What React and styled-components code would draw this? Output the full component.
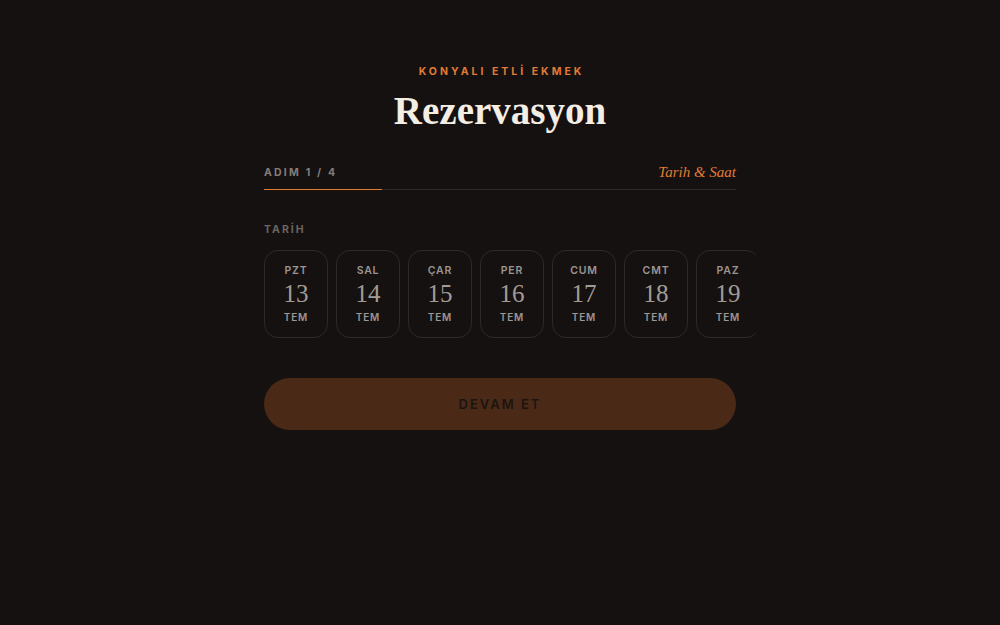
import styled, { createGlobalStyle } from 'styled-components';

const days = [
  { day: 'PZT', num: 13 },
  { day: 'SAL', num: 14 },
  { day: 'ÇAR', num: 15 },
  { day: 'PER', num: 16 },
  { day: 'CUM', num: 17 },
  { day: 'CMT', num: 18 },
  { day: 'PAZ', num: 19 },
];

const GlobalStyle = createGlobalStyle`
  html, body {
    margin: 0;
    padding: 0;
    background: #151111;
  }
  body {
    font-family: Inter, "Noto Sans", sans-serif;
  }
`;

export default function App() {
  const step = 1;
  const total = 4;

  return (
    <>
      <GlobalStyle />
      <Page>
        <Panel>
          <Header>
            <Brand>KONYALI ETLİ EKMEK</Brand>
            <Title>Rezervasyon</Title>
          </Header>

          <Steps>
            <StepRow>
              <StepCount>ADIM {step} / {total}</StepCount>
              <StepName>Tarih &amp; Saat</StepName>
            </StepRow>
            <Track>
              <Progress style={{ width: `${(step / total) * 100}%` }} />
            </Track>
          </Steps>

          <Section>
            <Label>TARİH</Label>
            <DateStrip>
              {days.map((d) => (
                <DateCard key={d.num} type="button">
                  <DayName>{d.day}</DayName>
                  <DayNum>{d.num}</DayNum>
                  <Month>TEM</Month>
                </DateCard>
              ))}
            </DateStrip>
          </Section>

          <NextButton type="button" disabled>DEVAM ET</NextButton>
        </Panel>
      </Page>
    </>
  );
}

const Page = styled.main`
  min-height: 625px;
  display: flex;
  justify-content: center;
  padding-top: 66px;
  box-sizing: border-box;
`;

const Panel = styled.div`
  width: 472px;
  display: flex;
  flex-direction: column;
`;

const Header = styled.header`
  display: flex;
  flex-direction: column;
  align-items: center;
`;

const Brand = styled.div`
  font-size: 10.5px;
  font-weight: 700;
  letter-spacing: 3px;
  color: #e07b34;
  line-height: 12px;
  margin-right: -3px;
`;

const Title = styled.h1`
  margin: 13px 0 0;
  font-family: "Liberation Serif", "DejaVu Serif", serif;
  font-size: 39px;
  font-weight: 700;
  letter-spacing: 0;
  line-height: 40px;
  color: #f4ede4;
`;

const Steps = styled.div`
  margin-top: 30px;
`;

const StepRow = styled.div`
  display: flex;
  justify-content: space-between;
  align-items: center;
  height: 22px;
`;

const StepCount = styled.span`
  font-size: 10.5px;
  font-weight: 700;
  letter-spacing: 2.2px;
  color: #857d79;
`;

const StepName = styled.span`
  font-family: "Liberation Serif", "DejaVu Serif", serif;
  font-style: italic;
  font-size: 15px;
  font-weight: 500;
  color: #e07b34;
`;

const Track = styled.div`
  margin-top: 6px;
  height: 1px;
  background: #2d2826;
`;

const Progress = styled.div`
  height: 100%;
  background: #e07b34;
`;

const Section = styled.section`
  margin-top: 34px;
`;

const Label = styled.div`
  font-size: 10.5px;
  font-weight: 700;
  letter-spacing: 2px;
  color: #6c6562;
  line-height: 12px;
`;

const DateStrip = styled.div`
  margin-top: 14px;
  margin-right: -20px;
  display: flex;
  gap: 8px;
  overflow: hidden;
`;

const DateCard = styled.button`
  flex: 0 0 64px;
  height: 88px;
  box-sizing: border-box;
  border: 1px solid #2e2927;
  border-radius: 14px;
  background: transparent;
  padding: 13px 0 0;
  display: flex;
  flex-direction: column;
  align-items: center;
  font-family: inherit;
  cursor: pointer;
`;

const DayName = styled.span`
  font-size: 10.5px;
  font-weight: 600;
  letter-spacing: 0.8px;
  color: #9c9591;
  line-height: 14px;
`;

const DayNum = styled.span`
  font-family: "Liberation Serif", "DejaVu Serif", serif;
  font-size: 25px;
  color: #a39b96;
  line-height: 24px;
  margin-top: 4px;
`;

const Month = styled.span`
  margin-top: 4px;
  font-size: 10px;
  font-weight: 600;
  letter-spacing: 0.8px;
  color: #9c9591;
  line-height: 14px;
`;

const NextButton = styled.button`
  margin-top: 40px;
  height: 52px;
  border: none;
  border-radius: 26px;
  background: #4a2a17;
  color: #1c1411;
  font-family: inherit;
  font-size: 13px;
  font-weight: 600;
  letter-spacing: 2px;
  cursor: not-allowed;
`;
